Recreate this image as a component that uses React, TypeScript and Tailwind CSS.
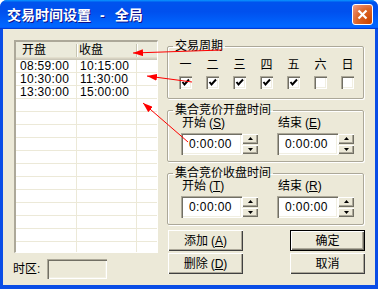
import React from "react";

const raised =
  "bg-[#ECE9D8] shadow-[inset_1px_1px_#fff,inset_-1px_-1px_#716f64,inset_-2px_-2px_#aca899]";
const sunken =
  "shadow-[inset_1px_1px_#aca899,inset_2px_2px_#716f64,inset_-1px_-1px_#fff,inset_-2px_-2px_#f1efe2]";

const days = ["一", "二", "三", "四", "五", "六", "日"];
const times = [
  ["08:59:00", "10:15:00"],
  ["10:30:00", "11:30:00"],
  ["13:30:00", "15:00:00"],
];

function Check({ on }: { on: boolean }) {
  return (
    <div className={`w-[13px] h-[13px] bg-white ${sunken} flex items-center justify-center`}>
      {on && (
        <svg width="9" height="9" viewBox="0 0 9 9">
          <path d="M1.5 4 L3.5 6.5 L8 1.5" stroke="#000" strokeWidth="2" fill="none" />
        </svg>
      )}
    </div>
  );
}

function SpinEdit() {
  return (
    <div className="flex h-[22px] w-[77px]">
      <div className={`w-[61px] h-full bg-white ${sunken} flex items-center pl-[8px] text-[12px] tracking-[0.4px]`}>
        0:00:00
      </div>
      <div className="w-[16px] flex flex-col gap-[1px] py-[1px]">
        <div className={`flex-1 ${raised} flex items-center justify-center`}>
          <svg width="5" height="3" viewBox="0 0 5 3">
            <path d="M0 3 L2.5 0 L5 3z" fill="#000" />
          </svg>
        </div>
        <div className={`flex-1 ${raised} flex items-center justify-center`}>
          <svg width="5" height="3" viewBox="0 0 5 3">
            <path d="M0 0 L2.5 3 L5 0z" fill="#000" />
          </svg>
        </div>
      </div>
    </div>
  );
}

function TimeGroup({ title, a, b }: { title: string; a: string; b: string }) {
  return (
    <fieldset className="m-0 p-0 min-w-0 border border-[#ACA899] rounded-[2px] shadow-[inset_1px_1px_#fff,1px_1px_#fff]">
      <legend className="ml-[5px] px-[2px] text-[12px] leading-[12px]">{title}</legend>
      <div className="grid grid-cols-[96px_77px] pl-[13px] pb-[6px]">
        <div className="mt-[1px] pl-[1px] text-[12px] leading-[12px]">
          开始<span className="ml-[3px]">(<u>{a}</u>)</span>
        </div>
        <div className="mt-[1px] pl-[1px] text-[12px] leading-[12px]">
          结束<span className="ml-[3px]">(<u>{b}</u>)</span>
        </div>
        <div className="mt-[4px]">
          <SpinEdit />
        </div>
        <div className="mt-[4px]">
          <SpinEdit />
        </div>
      </div>
    </fieldset>
  );
}

function Btn({ label, k, def }: { label: string; k?: string; def?: boolean }) {
  return (
    <div
      className={`h-[21px] w-[75px] bg-[#ECE9D8] flex items-center justify-center text-[12px] leading-[12px] ${
        def
          ? "shadow-[inset_0_0_0_1px_#000,inset_2px_2px_#fff,inset_-2px_-2px_#716f64,inset_-3px_-3px_#aca899]"
          : "shadow-[inset_1px_1px_#fff,inset_-1px_-1px_#404040,inset_-2px_-2px_#aca899]"
      }`}
    >
      {label}
      {k && (
        <span className="ml-[3px]">
          (<u>{k}</u>)
        </span>
      )}
    </div>
  );
}

export default function App() {
  return (
    <div className="w-[378px] h-[289px] bg-white font-['Liberation_Sans','Noto_Sans_CJK_SC',sans-serif] text-black">
      <div className="relative w-[378px] h-[289px] bg-[#0a4de6] rounded-t-[7px] overflow-hidden flex flex-col">
        {/* title bar */}
        <div className="h-[29px] shrink-0 flex items-center pl-[7px] pr-[5px] bg-[linear-gradient(to_bottom,#0997ff_0%,#0053ee_8%,#0050ee_40%,#0066ff_88%,#0066ff_93%,#005bff_95%,#003dd7_96%,#003dd7_100%)]">
          <div className="flex items-center text-white font-bold text-[14px] leading-[14px] [text-shadow:1px_1px_#0f1089]">
            <span>交易时间设置</span>
            <span className="ml-[9px]">-</span>
            <span className="ml-[10px]">全局</span>
          </div>
          <div className="ml-auto w-[21px] h-[21px] rounded-[3px] border border-white bg-[radial-gradient(circle_at_90%_90%,#cc4600_0%,#dc6527_55%,#e98460_80%,#f0a38a_100%)] flex items-center justify-center">
            <svg width="11" height="11" viewBox="0 0 11 11">
              <path d="M1.5 1.5 L9.5 9.5 M9.5 1.5 L1.5 9.5" stroke="#fff" strokeWidth="2.2" />
            </svg>
          </div>
        </div>

        {/* body */}
        <div className="flex-1 mx-[3px] mb-[4px] bg-[#ECE9D8] flex pl-[11px] pt-[11px]">
          {/* left column */}
          <div className="w-[144px] flex flex-col">
            <div className="h-[213px] w-[144px] bg-white border-l-2 border-t-2 border-[#ACA899] border-r border-b border-r-white border-b-white overflow-hidden">
              <div className="h-[18px] flex items-center bg-[#EBEADB] pb-[2px] text-[12px] leading-[12px] shadow-[inset_0_-1px_#cbc7b8,inset_0_-2px_#d6d2c2,inset_0_-3px_#e2decd]">
                <div className="w-[60px] pl-[6px]">开盘</div>
                <div className="w-[2px] h-[13px] bg-[linear-gradient(to_right,#c7c5b2_50%,#fff_50%)]" />
                <div className="w-[58px] pl-[1px]">收盘</div>
                <div className="w-[2px] h-[13px] bg-[linear-gradient(to_right,#c7c5b2_50%,#fff_50%)]" />
              </div>
              {Array.from({ length: 15 }).map((_, i) => (
                <div key={i} className="grid grid-cols-[61px_60px_1fr] h-[13px] text-[12px] leading-[12px] tracking-[0.3px]">
                  <div className="border-r border-b border-[#ECE9D8] pl-[4px]">{times[i]?.[0]}</div>
                  <div className="border-r border-b border-[#ECE9D8] pl-[3px]">{times[i]?.[1]}</div>
                  <div className="border-b border-[#ECE9D8]" />
                </div>
              ))}
            </div>
            <div className="mt-[6px] -ml-[1px] flex items-center">
              <div className="w-[34px] text-[12px] leading-[12px]">时区:</div>
              <div className={`w-[60px] h-[20px] bg-[#ECE9D8] ${sunken}`} />
            </div>
          </div>

          {/* right column */}
          <div className="ml-[9px] w-[198px] flex flex-col">
            <div className="w-[197px] flex flex-col">
              <fieldset className="m-0 p-0 min-w-0 border border-[#ACA899] rounded-[2px] shadow-[inset_1px_1px_#fff,1px_1px_#fff]">
                <legend className="ml-[5px] px-[2px] text-[12px] leading-[12px]">交易周期</legend>
                <div className="pl-[4px] pr-[2px] pb-[9px]">
                  <div className="mt-[7px] grid grid-cols-7 w-[189px] text-[12px] leading-[12px]">
                    {days.map((d) => (
                      <div key={d} className="text-center">
                        {d}
                      </div>
                    ))}
                  </div>
                  <div className="mt-[5px] grid grid-cols-7 w-[189px]">
                    {days.map((d, i) => (
                      <div key={d} className="flex justify-center">
                        <Check on={i < 5} />
                      </div>
                    ))}
                  </div>
                </div>
              </fieldset>
              <div className="mt-[5px]">
                <TimeGroup title="集合竞价开盘时间" a="S" b="E" />
              </div>
              <div className="mt-[5px]">
                <TimeGroup title="集合竞价收盘时间" a="T" b="R" />
              </div>
            </div>
            <div className="mt-[5px] ml-[1px] grid grid-cols-[75px_75px] gap-x-[47px] gap-y-[2px]">
              <Btn label="添加" k="A" />
              <Btn label="确定" def />
              <Btn label="删除" k="D" />
              <Btn label="取消" />
            </div>
          </div>
        </div>

        {/* red annotation arrows */}
        <svg className="absolute top-0 left-0 pointer-events-none" width="378" height="289" viewBox="0 0 378 289">
          <defs>
            <marker
              id="ah"
              viewBox="0 0 10 7"
              refX="10"
              refY="3.5"
              markerWidth="10"
              markerHeight="7"
              markerUnits="userSpaceOnUse"
              orient="auto"
            >
              <path d="M0 0 L10 3.5 L0 7z" fill="#f00" />
            </marker>
          </defs>
          <line x1="222" y1="50" x2="133" y2="53" stroke="#f00" strokeWidth="1" markerEnd="url(#ah)" />
          <line x1="192" y1="82" x2="147" y2="76" stroke="#f00" strokeWidth="1" markerEnd="url(#ah)" />
          <line x1="188" y1="142" x2="143" y2="103" stroke="#f00" strokeWidth="1" markerEnd="url(#ah)" />
        </svg>
      </div>
    </div>
  );
}
